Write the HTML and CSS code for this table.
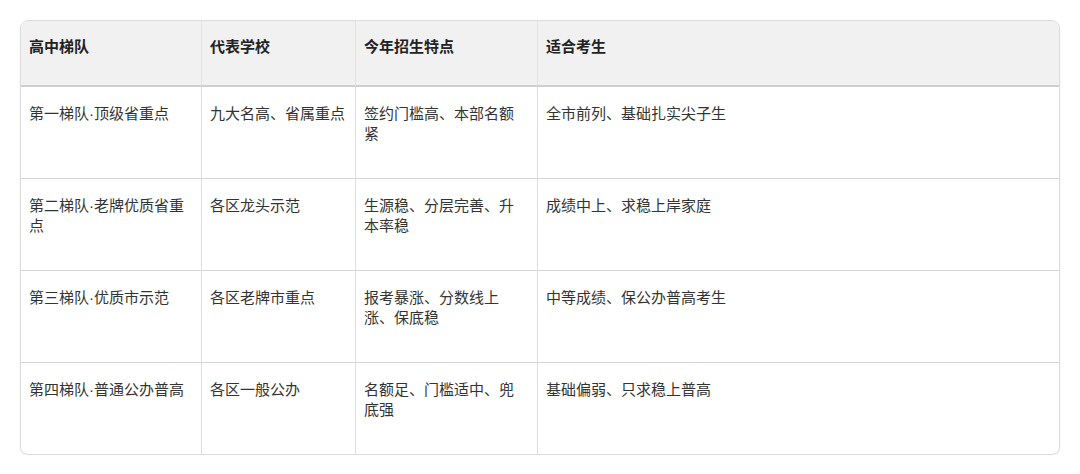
FILE: index.html
```html
<!DOCTYPE html>
<html lang="zh-CN">
<head>
<meta charset="utf-8">
<link rel="stylesheet" href="styles.css">
</head>
<body>
<div class="table">
  <div class="cell head">高中梯队</div>
  <div class="cell head">代表学校</div>
  <div class="cell head">今年招生特点</div>
  <div class="cell head last">适合考生</div>

  <div class="cell">第一梯队·顶级省重点</div>
  <div class="cell">九大名高、省属重点</div>
  <div class="cell">签约门槛高、本部名额紧</div>
  <div class="cell last">全市前列、基础扎实尖子生</div>

  <div class="cell">第二梯队·老牌优质省重点</div>
  <div class="cell">各区龙头示范</div>
  <div class="cell">生源稳、分层完善、升本率稳</div>
  <div class="cell last">成绩中上、求稳上岸家庭</div>

  <div class="cell">第三梯队·优质市示范</div>
  <div class="cell">各区老牌市重点</div>
  <div class="cell">报考暴涨、分数线上涨、保底稳</div>
  <div class="cell last">中等成绩、保公办普高考生</div>

  <div class="cell bottom">第四梯队·普通公办普高</div>
  <div class="cell bottom">各区一般公办</div>
  <div class="cell bottom">名额足、门槛适中、兜底强</div>
  <div class="cell bottom last">基础偏弱、只求稳上普高</div>
</div>
</body>
</html>
```

FILE: styles.css
```css
html, body {
  margin: 0;
  padding: 0;
  background: #ffffff;
}
body {
  padding: 20px 0 0 20px;
  font-family: "Liberation Sans", "Noto Sans CJK SC", sans-serif;
  font-size: 15px;
  line-height: 20px;
  color: #333333;
}
.table {
  width: 1040px;
  box-sizing: border-box;
  border: 1px solid #dcdcdc;
  border-radius: 8px;
  overflow: hidden;
  box-shadow: 0 1px 2px rgba(0, 0, 0, 0.08);
  display: grid;
  grid-template-columns: 181px 154px 182px 1fr;
}
.cell {
  box-sizing: border-box;
  height: 92px;
  padding: 17px 9px 0 8px;
  border-right: 1px solid #dedede;
  border-bottom: 1px solid #d6d6d6;
}
.cell.last {
  border-right: none;
}
.cell.bottom {
  border-bottom: none;
  height: 91px;
}
.head {
  height: 66px;
  padding-top: 16px;
  background: #f1f1f1;
  font-weight: bold;
  color: #222222;
  border-bottom: 2px solid #cfcfcf;
  border-right-color: #e2e2e2;
}
```
